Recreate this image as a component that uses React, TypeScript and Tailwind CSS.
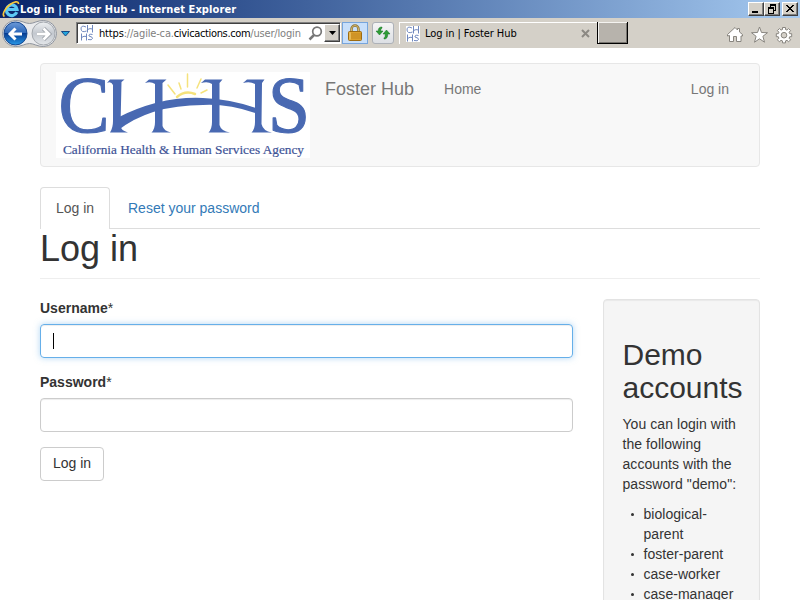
import React from "react";

const tahoma = "font-['DejaVu_Sans_Condensed','Noto_Sans',sans-serif]";

function Favicon() {
  return (
    <svg width="14" height="16" viewBox="0 0 14 16" className="shrink-0">
      <rect width="14" height="16" fill="#fff" />
      <g fill="none" stroke="#7088be" strokeWidth="1">
        <path d="M6 2Q1 -.5 1 4Q1.500 8 6.500 6M7.500 0v7.500M12.500 0v7.500M7.500 4.500Q10 3 12.500 4" />
        <path d="M1.500 8.500v7M6.500 8.500v7M1.500 12.500Q4 10.500 6.500 11.500M12.500 9.500Q8.500 8.500 9 11Q13 12 12.500 13.500Q12 15.500 8 14.500" />
      </g>
    </svg>
  );
}

function ExplorerLogo() {
  return (
    <svg width="18" height="18" viewBox="0 0 18 18" className="shrink-0">
      <path d="M14.700 12.200A5.300 5.300 0 1 1 15 9.500H6" fill="none" stroke="#5cc8f5" strokeWidth="3.200" />
      <path d="M2.500 16.500C-.5 15 3 8 8 4.500C12 1.500 16.500 .5 16.500 4" fill="none" stroke="#f8c83c" strokeWidth="1.700" />
    </svg>
  );
}

function NavigationArrows() {
  return (
    <svg width="73" height="30" viewBox="0 0 73 30" className="shrink-0">
      <defs>
        <linearGradient id="back" x1="0" y1="0" x2="0" y2="1">
          <stop offset="0" stopColor="#6d9ad8" />
          <stop offset=".48" stopColor="#2a66b8" />
          <stop offset=".5" stopColor="#053c92" />
          <stop offset="1" stopColor="#2a9ae8" />
        </linearGradient>
        <linearGradient id="forward" x1="0" y1="0" x2="0" y2="1">
          <stop offset="0" stopColor="#eef0f2" />
          <stop offset=".5" stopColor="#c3c8cf" />
          <stop offset="1" stopColor="#e4e7ea" />
        </linearGradient>
      </defs>
      <path d="M15.500 2.500C22 2.500 25 5.500 29.500 5.500C34 5.500 37 2.500 43.500 2.500A13 13 0 0 1 43.500 28.500C37 28.500 34 25.500 29.500 25.500C25 25.500 22 28.500 15.500 28.500A13 13 0 0 1 15.500 2.500Z" fill="#e9eaec" stroke="#8e949e" strokeWidth="1" />
      <circle cx="15.500" cy="15.500" r="11.500" fill="url(#back)" stroke="#17488f" />
      <circle cx="43.500" cy="15.500" r="11.500" fill="url(#forward)" stroke="#a3a8ae" />
      <path d="M22 16H10M15.500 10.500L10 16L15.500 21.500" fill="none" stroke="#fff" strokeWidth="3" />
      <path d="M37 16H49M43.500 10.500L49 16L43.500 21.500" fill="none" stroke="#8e949b" strokeWidth="4.200" />
      <path d="M37 16H49M43.500 10.500L49 16L43.500 21.500" fill="none" stroke="#fff" strokeWidth="2.800" />
      <path d="M61.500 13.500H69.500L65.500 18Z" fill="#22a6dc" stroke="#174a87" strokeWidth="1" strokeLinejoin="round" />
    </svg>
  );
}

function WindowButton({ children }: { children: React.ReactNode }) {
  return (
    <div className="h-[14px] w-4 border border-t-white border-l-white border-r-[#404040] border-b-[#404040] bg-[#d4d0c8] shadow-[inset_-1px_-1px_0_#808080]">
      <svg width="14" height="12" viewBox="0 0 14 12" fill="none" stroke="#000" shapeRendering="crispEdges">
        {children}
      </svg>
    </div>
  );
}

function TitleBar() {
  return (
    <div className="flex h-[18px] items-center bg-linear-to-r from-[#0a246a] to-[#a6caf0] pr-[2px] pl-[2px]">
      <ExplorerLogo />
      <span className={`${tahoma} pt-px text-[11px] leading-[17px] font-bold tracking-[0.09px] whitespace-nowrap text-white`}>
        Log in | Foster Hub - Internet Explorer
      </span>
      <div className="ml-auto flex">
        <WindowButton><path d="M3 9h6" strokeWidth="2" /></WindowButton>
        <WindowButton>
          <path d="M5 2h6M3 5h6" strokeWidth="2" />
          <path d="M5.500 2v3M10.500 2v5.500H9M3.500 5v5.500H8.500V5" />
        </WindowButton>
        <div className="ml-[2px]">
          <WindowButton><path d="M3 2l7 7M4 2l7 7M10 2l-7 7M11 2l-7 7" /></WindowButton>
        </div>
      </div>
    </div>
  );
}

function AddressBar() {
  return (
    <div className="ml-[3px] flex h-[22px] w-[265px] items-center border-t border-r border-b border-l border-t-[#808080] border-r-white border-b-white border-l-[#808080] bg-white pl-[3px] shadow-[inset_1px_1px_0_#404040]">
      <Favicon />
      <div className={`${tahoma} ml-[5px] w-[206px] overflow-hidden pt-[2px] text-[11px] leading-4 tracking-[-0.17px] whitespace-nowrap text-[#808080]`}>
        <span className="text-black">https</span>://agile-ca.<span className="tracking-[-0.35px] text-black">civicactions.com</span>/user/login
      </div>
      <svg width="16" height="16" viewBox="0 0 16 16" fill="none" stroke="#777" className="ml-[3px] shrink-0">
        <circle cx="9" cy="6.500" r="4.300" strokeWidth="1.700" />
        <path d="M6 10L1.500 14.500" strokeWidth="2.500" />
      </svg>
      <div className="flex h-[18px] w-4 shrink-0 items-center justify-center border border-t-white border-l-white border-r-[#404040] border-b-[#404040] bg-[#d4d0c8] shadow-[inset_-1px_-1px_0_#808080]">
        <svg width="7" height="4" viewBox="0 0 7 4"><path d="M0 0h7L3.500 4Z" /></svg>
      </div>
    </div>
  );
}

function Toolbar() {
  return (
    <div className="flex h-[30px] items-center bg-[#d4d0c8]">
      <NavigationArrows />
      <AddressBar />
      <div className="ml-[1px] flex h-[22px] w-[26px] items-center justify-center border border-[#77a5dc] bg-[#c8dffa]">
        <svg width="14" height="18" viewBox="0 0 14 18">
          <path d="M3.500 9V5a3.500 3.500 0 0 1 7 0V9" fill="none" stroke="#8b7337" strokeWidth="2.500" />
          <path d="M3.500 9V5a3.500 3.500 0 0 1 7 0V9" fill="none" stroke="#d4b669" strokeWidth="1" />
          <rect x=".5" y="7.500" width="13" height="9" rx="1" fill="#dca12d" stroke="#9c6b12" />
          <path d="M1 10h12M1 12h12M1 14h12" stroke="#b97d1b" strokeWidth=".7" />
          <path d="M2 8.500v7" stroke="#ffe18a" />
        </svg>
      </div>
      <div className="ml-[4px] flex h-[22px] w-[22px] items-center justify-center rounded-[3px] border border-[#adb1b8] bg-linear-to-b from-[#f5f5f5] to-[#dcdfe4]">
        <svg width="16" height="14" viewBox="0 0 16 14">
          <path d="M7 1Q3 1 3.300 5H1L4.500 9L8 5H5.700Q5.500 3 7 2Z" fill="#2e9d35" stroke="#137022" strokeWidth=".5" />
          <path d="M9 13Q13 13 12.700 8H15L11.500 4L8 8H10.300Q10.500 11 9 12Z" fill="#2e9d35" stroke="#137022" strokeWidth=".5" />
        </svg>
      </div>
      <div className="ml-[5px] flex h-[22px] w-[198px] items-center border-t border-l border-white pl-[6px]">
        <Favicon />
        <span className={`${tahoma} ml-[5px] pt-px text-[11px] tracking-[-0.08px] whitespace-nowrap text-black`}>Log in | Foster Hub</span>
        <svg width="9" height="9" viewBox="0 0 9 9" className="mr-[7px] ml-auto" stroke="#8c8983" strokeWidth="2">
          <path d="M1 1l7 7M8 1L1 8" />
        </svg>
      </div>
      <div className="h-[22px] w-[31px] border-x border-b border-black bg-[#b7b3ac] shadow-[inset_1px_1px_0_#f4f3f0,inset_-1px_-1px_0_#77746f]" />
      <div className="mt-[3px] mr-[7px] ml-auto flex items-center gap-[7px]">
        <svg width="18" height="18" viewBox="0 0 18 18" fill="#fff" stroke="#88857f">
          <path d="M4.500 9.500L2.500 10L2.500 8.500L10 1.500L12.500 4V2.500H14.500V6L17.500 8.500V10H16V15.500H11.500V10.500H8.500V15.500H4.500Z" />
        </svg>
        <svg width="18" height="18" viewBox="0 0 18 18" fill="#fff" stroke="#88857f">
          <path d="M9.500 1L11.500 6.500L17.500 6.700L12.900 10.300L14.500 16.200L9.500 12.800L4.500 16.200L6.100 10.300L1.500 6.700L7.500 6.500Z" />
        </svg>
        <svg width="18" height="18" viewBox="0 0 18 18" fill="#fff" stroke="#88857f">
          <path d="M7.500 1.500h3v2l1.500.6 1.600-1.500 2 2-1.500 1.600.6 1.500h2v3h-2l-.6 1.500 1.500 1.600-2 2-1.600-1.500-1.500.6v2h-3v-2l-1.500-.6-1.600 1.500-2-2 1.500-1.600-.6-1.500h-2v-3h2l.6-1.500-1.500-1.600 2-2L6 4.100l1.500-.6Z" />
          <circle cx="9" cy="9.200" r="2.800" fill="#d4d0c8" />
        </svg>
      </div>
    </div>
  );
}

function AgencyLogo() {
  return (
    <svg width="254" height="86" viewBox="56 72 254 86" className="shrink-0">
      <rect x="56" y="72" width="254" height="86" fill="#fff" />
      <g fill="none" stroke="#f5e27c" strokeWidth="1.500" strokeLinecap="round">
        <path d="M177 97Q185 90 195 94" strokeWidth="2.500" />
        <path d="M168 85l7 9M179 83l2 6M187.500 74v13M201 79l-4 9M207 90l-6 3" />
      </g>
      <g fill="#4969b2">
        <g fontSize="80" stroke="#4969b2" strokeWidth="1.200" strokeLinejoin="round" className="font-['Liberation_Serif',serif]">
          <text x="58.500" y="132" textLength="51" lengthAdjust="spacingAndGlyphs">C</text>
          <text x="268" y="132" textLength="42" lengthAdjust="spacingAndGlyphs">S</text>
        </g>
        <path d="M107 83L110 79.500H124.500L121.500 82L120.500 126Q121 130.500 128 132.500H110Q113 128 113 121V85Q111 81 107 83Z" />
        <path d="M145 83L149 79.500H166.500L162.500 83V126Q164 131 171 132.500H151.500Q155 129 155 122V84Q151 81 145 83Z" />
        <path d="M201 83L205 79.500H222.500L219.500 83V125Q221 131 230 132.500H208.500Q212 129 212 122V84Q208 81 201 83Z" />
        <path d="M243 83L247 79.500H264.500L262 83L261.500 124Q263 131 272 132.500H251.500Q255 129 255 122V84Q250 81 243 83Z" />
        <path d="M117 118Q160 96 203 98Q232 99 260 109.500V114.500Q229 103.500 203 105Q150 105 117 131Z" />
        <text x="63" y="154" fontSize="13.500" textLength="241" lengthAdjust="spacingAndGlyphs" className="font-['Liberation_Serif',serif]" fill="#3d5296" stroke="#3d5296" strokeWidth=".2">
          California Health &amp; Human Services Agency
        </text>
      </g>
    </svg>
  );
}

function Navbar() {
  return (
    <nav className="flex h-[104px] items-start rounded border border-[#e7e7e7] bg-[#f8f8f8] px-[15px] pt-2 leading-5 text-[#777]">
      <AgencyLogo />
      <a className="mt-[7px] ml-[15px] text-[18px] whitespace-nowrap">Foster Hub</a>
      <a className="mt-[7px] ml-[30px]">Home</a>
      <a className="mt-[7px] mr-[15px] ml-auto">Log in</a>
    </nav>
  );
}

function Field({ label, focused = false }: { label: string; focused?: boolean }) {
  return (
    <div className="mb-[14px]">
      <label className="mb-[6px] block leading-5 font-bold">
        {label}<span className="font-normal">*</span>
      </label>
      <div
        className={
          focused
            ? "flex h-[34px] items-center rounded border border-[#66afe9] pl-3 shadow-[inset_0_1px_1px_rgba(0,0,0,0.075),0_0_6px_rgba(102,175,233,0.5)]"
            : "flex h-[34px] items-center rounded border border-[#ccc] pl-3 shadow-[inset_0_1px_1px_rgba(0,0,0,0.075)]"
        }
      >
        {focused && <span className="h-4 w-px bg-black" />}
      </div>
    </div>
  );
}

function DemoAccounts() {
  return (
    <aside className="h-[340px] w-[157px] shrink-0 rounded border border-[#e3e3e3] bg-[#f5f5f5] p-[19px] pt-[18px] pr-0 shadow-[inset_0_1px_1px_rgba(0,0,0,0.05)]">
      <h2 className="mt-5 mb-[10px] -ml-[0.5px] text-[30px] leading-[33px]">Demo<br />accounts</h2>
      <p className="mb-[10px] -ml-[0.5px] leading-5 tracking-[0.06px]">
        You can login with<br />the following<br />accounts with the<br />password "demo":
      </p>
      <ul className="leading-5 tracking-[0.03px]">
        {["biological-parent", "foster-parent", "case-worker", "case-manager"].map((account) => (
          <li key={account} className="flex">
            <span className="flex h-5 w-[20.5px] shrink-0 items-center pl-2">
              <span className="mt-px size-[3px] rounded-full bg-[#333]" />
            </span>
            <span className={account === "biological-parent" ? "w-[70px]" : "whitespace-nowrap"}>{account}</span>
          </li>
        ))}
      </ul>
    </aside>
  );
}

export default function App() {
  return (
    <div className="flex h-[600px] w-[800px] flex-col overflow-hidden bg-white">
      <header className="shrink-0">
        <TitleBar />
        <Toolbar />
      </header>
      <main className="px-10 pt-[15px] font-['Liberation_Sans',Arial,sans-serif] text-[14px] text-[#333]">
        <Navbar />
        <div className="mt-5 flex h-[42px] items-end border-b border-[#ddd] leading-5">
          <a className="-mb-px h-[42px] w-[70px] rounded-t border border-b-0 border-[#ddd] bg-white px-[15px] py-[10px] whitespace-nowrap text-[#555]">Log in</a>
          <a className="ml-[2px] h-10 px-4 py-[10px] text-[#337ab7]">Reset your password</a>
        </div>
        <h1 className="h-[50px] border-b border-[#eee] text-[36px] leading-[39.6px]">Log in</h1>
        <div className="mt-5 flex gap-[30px]">
          <form className="-mt-px w-[533px]">
            <Field label="Username" focused />
            <Field label="Password" />
            <button type="button" className="mt-px h-[34px] w-16 rounded border border-[#ccc] bg-white pb-[2px] leading-5">Log in</button>
          </form>
          <DemoAccounts />
        </div>
      </main>
    </div>
  );
}
